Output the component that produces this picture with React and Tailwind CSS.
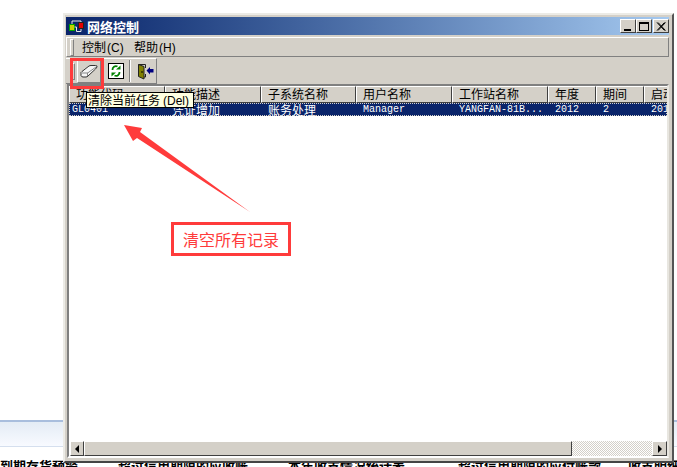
import React from "react";

const cjk = "font-['Noto_Sans_CJK_SC','Liberation_Sans',sans-serif]";
const latin = "font-['Liberation_Sans',sans-serif] text-[12px]";
const raised = "border border-t-white border-l-white border-r-[#404040] border-b-[#404040]";
const cols = [
  ["功能代码", 96],
  ["功能描述", 96],
  ["子系统名称", 95],
  ["用户名称", 96],
  ["工作站名称", 96],
  ["年度", 48],
  ["期间", 48],
  ["启动时间", 90],
];
const row = [
  ["GL0401", 96],
  ["凭证增加", 96],
  ["账务处理", 95],
  ["Manager", 96],
  ["YANGFAN-81B...", 96],
  ["2012", 48],
  ["2", 48],
  ["2012", 90],
];

function CapBtn({ children }) {
  return (
    <div className={`w-4 h-[14px] bg-[#d4d0c8] ${raised} flex items-center justify-center`}>{children}</div>
  );
}

function Grip() {
  return <div className="w-[4px] h-[17px] shrink-0 border border-t-white border-l-white border-r-[#808080] border-b-[#808080]" />;
}

export default function App() {
  return (
    <div className={`relative w-[677px] h-[467px] overflow-hidden bg-white ${cjk}`}>
      {/* page behind the window */}
      <div className="absolute left-0 right-0 top-[420px] h-[27px] border-t-2 border-t-[#a9bedd] border-b border-b-[#d5dfee] bg-gradient-to-b from-[#e4ecf5] to-[#f8faff]" />
      <div className="absolute left-0 top-[458px] text-[13px] font-bold text-black whitespace-nowrap leading-4 flex">
        <span className="w-[118px]">到期存货预警</span>
        <span className="w-[170px]">超过信用期限的应收账</span>
        <span className="w-[170px]">本年收支情况统计表</span>
        <span className="w-[170px]">超过信用期限的应付账款</span>
        <span>收支明细</span>
      </div>

      {/* window */}
      <div className="absolute left-[63px] top-[13px] w-[611px] h-[450px] bg-[#d4d0c8] border-2 border-t-[#ecebe6] border-l-[#ecebe6] border-r-[#555] border-b-[#444] pt-[2px] pl-[1px] pr-[3px] pb-[3px] flex flex-col">
        {/* title bar */}
        <div className="h-[18px] shrink-0 bg-gradient-to-r from-[#0a246a] to-[#a6caf0] flex items-center pl-[2px] pr-0">
          <svg width="19" height="14" viewBox="0 0 19 14" className="shrink-0">
            <rect x="1.5" y="5.5" width="5" height="6" fill="#c8d000" stroke="#00a000" />
            <rect x="10.5" y="3.5" width="5" height="6" fill="#e00000" stroke="#202020" />
            <path d="M4 5 V2 H13 V3 M6.5 8 H8.5 V12.5 H13 V10" fill="none" stroke="#e8e8e8" />
          </svg>
          <span className="text-white font-bold text-[13px] leading-none">网络控制</span>
          <div className="ml-auto flex items-center">
            <CapBtn>
              <div className="w-[7px] h-[2px] bg-black mt-[7px] -ml-[1px]" />
            </CapBtn>
            <CapBtn>
              <div className="w-[10px] h-[9px] border border-black border-t-2" />
            </CapBtn>
            <div className="ml-[1px]">
              <CapBtn>
                <svg width="10" height="9" viewBox="0 0 10 9">
                  <path d="M1 0.5 L8.5 8.5 M2 0.5 L9.5 8.5 M8.5 0.5 L1 8.5 M9.5 0.5 L2 8.5" stroke="#000" strokeWidth="1" fill="none" />
                </svg>
              </CapBtn>
            </div>
          </div>
        </div>

        {/* menu */}
        <div className="h-[20px] shrink-0 mt-[2px] flex items-center border border-t-white border-l-white border-r-[#808080] border-b-[#808080] pl-[3px]">
          <Grip />
          <span className="ml-[8px] w-[52px] text-[12px] text-black whitespace-nowrap">控制<span className={`${latin} ml-[1px]`}>(C)</span></span>
          <span className="text-[12px] text-black whitespace-nowrap">帮助<span className={`${latin} ml-[1px]`}>(H)</span></span>
        </div>

        {/* toolbar */}
        <div className="w-[91px] h-[26px] mt-[1px] shrink-0 flex items-center border-b border-b-[#808080] pl-[5px] border-r border-r-[#808080] border-t border-t-white">
          <Grip />
          <div className="ml-[2px] w-[24px] h-[23px] shrink-0 flex items-center justify-center border border-t-white border-l-white border-r-[#808080] border-b-[#808080]">
            <svg width="18" height="13" viewBox="0 0 18 13">
              <path d="M1 8.5 Q0.5 7.5 2 6.5 L9 1 Q10 0.5 11 0.5 H15.5 Q17.5 0.5 17 2 L15.5 4 L8 11 Q7 12 6 12 H3 Q1.5 12 1 10.5 Z" fill="#f4f4f4" stroke="#333" />
              <path d="M2 8 H7 Q8 8 9 7 L16 2" fill="none" stroke="#888" />
              <path d="M7.5 8 V11" stroke="#888" fill="none" />
            </svg>
          </div>
          <div className="ml-[7px] w-[16px] h-[16px] shrink-0">
            <svg width="16" height="16" viewBox="0 0 16 16" className="block">
              <rect x="0.5" y="0.5" width="15" height="15" fill="#fff" stroke="#000" />
              <path d="M4.5 7 A3.5 3.5 0 0 1 9.5 3.5 M11.5 9 A3.5 3.5 0 0 1 6.5 12.5" fill="none" stroke="#008000" strokeWidth="1.8" />
              <path d="M8 6.5 H12.5 V2.5 Z M8 9.5 H3.5 V13.5 Z" fill="#008000" />
            </svg>
          </div>
          <div className="ml-[5px] w-[2px] h-[22px] shrink-0 bg-[#808080] border-r border-r-white" />
          <div className="ml-[6px] shrink-0">
            <svg width="17" height="17" viewBox="0 0 17 17" className="block">
              <path d="M1.5 1.5 L7 3.5 V16 L1.5 13.5 Z" fill="#808000" stroke="#222" />
              <path d="M1.5 1.5 H8.5 V5 M8.5 11 V14 H7" fill="none" stroke="#222" />
              <path d="M5 8 V10" stroke="#000" />
              <path d="M9.5 7.5 L13 4 V6 H16.5 V9.5 H13 V11.5 Z" fill="#000080" />
            </svg>
          </div>
        </div>

        {/* list */}
        <div className="ml-[1px] flex-1 min-h-0 bg-white border-2 border-t-[#808080] border-l-[#808080] border-r-[#e8e6e0] border-b-white flex flex-col overflow-hidden">
          <div className="flex shrink-0 h-[17px] overflow-hidden">
            {cols.map(([t, w]) => (
              <div key={t} style={{ width: w }} className={`shrink-0 bg-[#d4d0c8] ${raised} text-[12px] leading-[14px] text-black pl-[6px] whitespace-nowrap overflow-hidden`}>
                {t}
              </div>
            ))}
          </div>
          <div className="flex shrink-0 h-[13px] bg-[#0a246a] overflow-hidden outline-1 outline-dotted outline-offset-[-1px] outline-[#d4d0c8]">
            {row.map(([t, w], i) => (
              <div key={i} style={{ width: w }} className={`shrink-0 leading-[13px] text-white whitespace-nowrap overflow-hidden ${i === 0 ? "pl-[3px]" : "pl-[7px]"} ${/^[\x00-\x7f]+$/.test(t) ? "font-['Liberation_Mono',monospace] text-[10px]" : "text-[12px]"}`}>
                {t}
              </div>
            ))}
          </div>
          <div className="flex-1" />
          {/* scrollbar */}
          <div className="h-[15px] shrink-0 ml-px flex bg-[repeating-conic-gradient(#d4d0c8_0_25%,#fff_0_50%)] bg-[length:2px_2px]">
            <div className={`w-[14px] bg-[#d4d0c8] ${raised} flex items-center justify-center`}>
              <div className="w-0 h-0 border-y-[4px] border-y-transparent border-r-[4px] border-r-black" />
            </div>
            <div className={`w-[488px] bg-[#d4d0c8] ${raised}`} />
            <div className="flex-1" />
            <div className={`w-[15px] bg-[#d4d0c8] ${raised} flex items-center justify-center`}>
              <div className="w-0 h-0 border-y-[4px] border-y-transparent border-l-[4px] border-l-black" />
            </div>
          </div>
        </div>
      </div>

      {/* annotation: box around the clear button */}
      <div className="absolute left-[70px] top-[58px] w-[34px] h-[31px] border-[3px] border-[#ff3b3b]" />

      {/* tooltip */}
      <div className="absolute left-[86px] top-[92px] w-[108px] h-[16px] pl-[1px] bg-[#ffffe1] border border-black text-[12px] leading-[14px] text-black whitespace-nowrap">
        清除当前任务<span className={`${latin} ml-[3px]`}>(Del)</span>
      </div>

      {/* annotation: arrow */}
      <svg className="absolute left-[120px] top-[120px]" width="135" height="95" viewBox="0 0 135 95">
        <path d="M4 5 L22 8 L20 12 L130 92 L17 18 L13 21 Z" fill="#ff3b3b" />
      </svg>

      {/* annotation: callout */}
      <div className="absolute left-[171px] top-[222px] w-[120px] h-[34px] border-[3px] border-[#ff3b3b] bg-white flex items-center justify-center text-[16px] text-[#ff3b3b] whitespace-nowrap">
        清空所有记录
      </div>
    </div>
  );
}
